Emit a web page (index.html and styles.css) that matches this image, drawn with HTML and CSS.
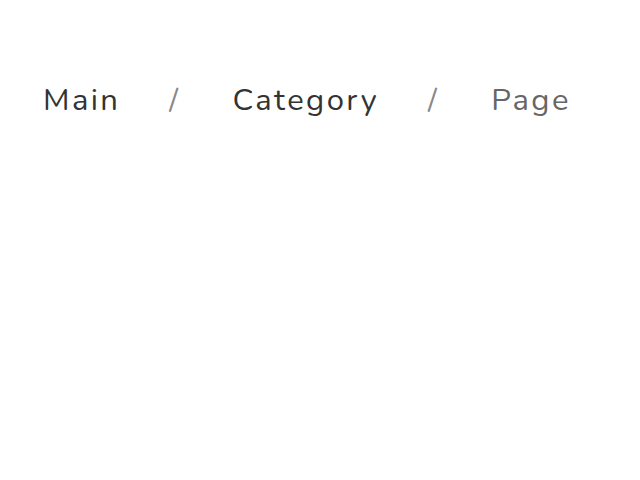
FILE: index.html
```html
<!DOCTYPE html>
<html>
<head>
<meta charset="utf-8">
<link rel="stylesheet" href="styles.css">
</head>
<body>
<nav class="breadcrumb">
  <ol class="crumbs">
    <li class="crumb"><a href="#">Main</a></li>
    <li class="crumb"><a href="#">Category</a></li>
    <li class="crumb current">Page</li>
  </ol>
</nav>
</body>
</html>
```
FILE: styles.css
```css
html, body { margin: 0; padding: 0; background: #fff; }
.breadcrumb { padding: 78px 0 0 43px; }
.crumbs {
  list-style: none; margin: 0; padding: 0;
  display: flex; align-items: center;
  font-family: Nunito, Lato, "Open Sans", sans-serif;
  font-size: 31px; letter-spacing: 2.4px; line-height: 44px;
}
.crumb a { color: #333; text-decoration: none; }
.crumb.current { color: #666; }
.crumb + .crumb::before {
  content: "/"; color: #888; margin: 0 52px 0 49px;
}
```
